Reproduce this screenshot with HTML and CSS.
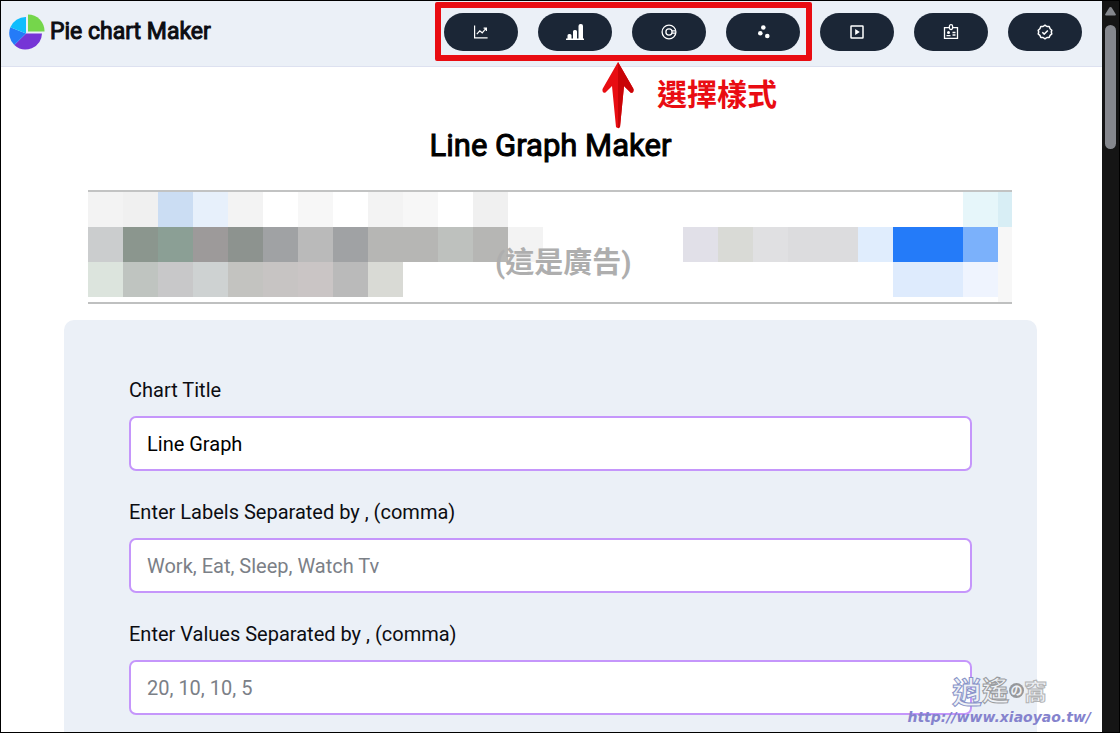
FILE: index.html
```
<!DOCTYPE html>
<html lang="en">
<head>
<meta charset="utf-8">
<title>Pie chart Maker</title>
<meta name="viewport" content="width=device-width, initial-scale=1">
<link rel="stylesheet" href="styles.css">
</head>
<body>
<div class="window">
  <div class="page">
    <header class="navbar">
      <a class="brand" href="#">
        <svg class="brand-logo" viewBox="0 0 36 36" aria-hidden="true">
          <path fill="#7635d6" d="M17 19.500h16A16.500 16.500 0 0 1 5.300 31z"/>
          <path fill="#247bf8" d="M17 19.500L5.300 31A16.500 16.500 0 0 1 1.300 13.300z"/>
          <path fill="#0fbdfd" d="M17 19.500L1.300 13.300A16.500 16.500 0 0 1 17 3z"/>
          <path fill="#75d64b" d="M19 17.500V.500A16.500 16.500 0 0 1 35.500 17.500z"/>
        </svg>
        <span>Pie chart Maker</span>
      </a>
      <nav class="tools">
        <div class="chart-tools">
          <button class="pill" type="button" aria-label="Line graph"><svg viewBox="0 0 16 16"><path fill="none" stroke="currentColor" stroke-width="1.200" d="M1.600 1.500v12.400h13M3.800 10.200l3-3.300 2.400 1.900 4-4.600M10.600 4.200h2.800v2.800"/></svg></button>
          <button class="pill" type="button" aria-label="Bar chart"><svg class="wide" viewBox="0 0 18 18"><path fill="currentColor" d="M1.500 15.500v-3q0-1.500 1.500-1.500h1q1.500 0 1.500 1.500v3h1.500V8.500Q7 7 8.500 7H9.500q1.500 0 1.500 1.500v7h1.500V3q0-2 2-2h.5q2 0 2 2v12.500h1V17H0v-1.500z"/></svg></button>
          <button class="pill" type="button" aria-label="Doughnut chart"><svg viewBox="0 0 16 16"><g fill="none" stroke="currentColor" stroke-width="1.300"><circle cx="8" cy="8" r="6.900"/><path d="M14.800 6.800h-3.700M14.800 9.200h-3.700"/><circle cx="8" cy="8" r="3.100"/></g></svg></button>
          <button class="pill" type="button" aria-label="Scatter plot"><svg viewBox="0 0 16 16"><g fill="currentColor"><circle cx="8.300" cy="3.500" r="2.300"/><circle cx="5.300" cy="9.300" r="2.300"/><circle cx="12.300" cy="12" r="2.300"/></g></svg></button>
          <svg class="arrow" viewBox="0 0 34 68" aria-hidden="true">
            <path fill="#e80d12" d="M17 1L1.500 28q-.5 4.500 3 3.500L11 25l4 41q2 2 4 0l4-41 6.500 6.500q3.500 1 3-3.500z"/>
            <path fill="#c90407" d="M17 1v66.500l2-1.500 4-41 6.500 6.500q3.500 1 3-3.500z"/>
          </svg>
          <span class="note">選擇樣式</span>
        </div>
        <button class="pill" type="button" aria-label="Video"><svg viewBox="0 0 16 16"><rect x="2" y="2" width="12" height="12" rx=".5" fill="none" stroke="currentColor" stroke-width="1.500"/><path fill="currentColor" d="M6.200 4.900v6.200L10.800 8z"/></svg></button>
        <button class="pill" type="button" aria-label="About"><svg viewBox="0 0 16 16"><g fill="none" stroke="currentColor" stroke-width="1.300"><path d="M6 3.700H1.500v10.600h13V3.700H10"/><rect x="6.400" y=".7" width="3.200" height="4.800" rx="1.500"/><path d="M3.500 11.700h4M9.500 8.500h3M9.500 11h3"/></g><circle cx="5.500" cy="8.600" r="1.500" fill="currentColor"/></svg></button>
        <button class="pill" type="button" aria-label="Verified"><svg viewBox="0 0 16 16"><g fill="none" stroke="currentColor" stroke-width="1.500" stroke-linejoin="round"><path d="M8 1.200l1.900 1.300 2.300 0 .9 2.200 1.700 1.500L14.300 8l.5 1.900-1.700 1.400-.9 2.200h-2.300L8 14.800l-1.900-1.300H3.800l-.9-2.200-1.700-1.400L1.700 8l-.5-1.800 1.700-1.500.9-2.200h2.300z"/><path d="M5.300 8.200l2 1.900 3.500-3.700"/></g></svg></button>
      </nav>
    </header>

    <main class="content">
      <h1 class="title">Line Graph Maker</h1>

      <aside class="ad">
        <svg class="ad-mosaic" viewBox="0 0 924 110" preserveAspectRatio="none" shape-rendering="crispEdges" aria-hidden="true">
          <g>
            <path fill="#f3f3f3" d="M0 0h35v35H0zM140 0h35v35h-35zM280 0h35v35h-35z"/>
            <path fill="#f0f0f0" d="M35 0h35v35H35zM385 0h35v35h-35z"/>
            <path fill="#cbddf3" d="M70 0h35v35H70z"/>
            <path fill="#e7f0fb" d="M105 0h35v35h-35z"/>
            <path fill="#f7f7f7" d="M210 0h35v35h-35zM315 0h35v35h-35zM910 35h14v75h-14z"/>
            <path fill="#e6f6fa" d="M875 0h35v35h-35z"/>
            <path fill="#d8eef5" d="M910 0h14v35h-14z"/>
          </g>
          <g>
            <path fill="#cbcdce" d="M0 35h35v35H0z"/>
            <path fill="#8b968e" d="M35 35h35v35H35z"/>
            <path fill="#8b9f95" d="M70 35h35v35H70z"/>
            <path fill="#9d9a9a" d="M105 35h35v35h-35z"/>
            <path fill="#8d938f" d="M140 35h35v35h-35z"/>
            <path fill="#a0a2a4" d="M175 35h35v35h-35zM245 35h35v35h-35z"/>
            <path fill="#bababa" d="M210 35h35v35h-35z"/>
            <path fill="#b6b6b4" d="M280 35h70v35h-70zM385 35h35v35h-35z"/>
            <path fill="#bec1be" d="M350 35h35v35h-35z"/>
            <path fill="#f3f3f3" d="M420 35h35v35h-35z"/>
            <path fill="#e1e0e8" d="M595 35h35v35h-35z"/>
            <path fill="#d9dad6" d="M630 35h35v35h-35z"/>
            <path fill="#e0e0e2" d="M665 35h35v35h-35z"/>
            <path fill="#dcdcde" d="M700 35h70v35h-70z"/>
            <path fill="#e0edfd" d="M770 35h35v35h-35z"/>
            <path fill="#247bf9" d="M805 35h70v35h-70z"/>
            <path fill="#7bb1fb" d="M875 35h35v35h-35z"/>
          </g>
          <g>
            <path fill="#dce4dd" d="M0 70h35v35H0z"/>
            <path fill="#bfc4c0" d="M35 70h35v35H35z"/>
            <path fill="#c8c8c9" d="M70 70h35v35H70z"/>
            <path fill="#ced2d2" d="M105 70h35v35h-35z"/>
            <path fill="#c3c3c0" d="M140 70h35v35h-35z"/>
            <path fill="#c7c4c3" d="M175 70h35v35h-35z"/>
            <path fill="#cac5c5" d="M210 70h35v35h-35z"/>
            <path fill="#bababa" d="M245 70h35v35h-35z"/>
            <path fill="#d9dad5" d="M280 70h35v35h-35z"/>
            <path fill="#deebfd" d="M805 70h70v35h-70z"/>
            <path fill="#eff4fe" d="M875 70h35v35h-35z"/>
          </g>
        </svg>
        <span class="ad-note">(這是廣告)</span>
      </aside>

      <form class="card">
        <div class="field">
          <label for="chart-title">Chart Title</label>
          <input id="chart-title" type="text" value="Line Graph">
        </div>
        <div class="field">
          <label for="chart-labels">Enter Labels Separated by , (comma)</label>
          <input id="chart-labels" type="text" placeholder="Work, Eat, Sleep, Watch Tv">
        </div>
        <div class="field">
          <label for="chart-values">Enter Values Separated by , (comma)</label>
          <input id="chart-values" type="text" placeholder="20, 10, 10, 5">
        </div>
      </form>
    </main>
  </div>

  <div class="scrollbar" aria-hidden="true">
    <svg class="scroll-up" viewBox="0 0 11 9"><path fill="#85878d" d="M5.500 0q.8 0 1.300.8l4 6.500Q11 8.500 10 8.500H1Q0 8.500.200 7.300l4-6.500Q4.700 0 5.500 0z"/></svg>
    <div class="scroll-thumb"></div>
  </div>

  <div class="watermark">
    <span class="mark-name"><span class="mark-blue">逍</span><span class="mark-gray">遙</span><span class="mark-no">の</span><span class="mark-light">窩</span></span>
    <span class="mark-url">http://www.xiaoyao.tw/</span>
  </div>
</div>
</body>
</html>
```
FILE: styles.css
```
* {
  box-sizing: border-box;
}

body {
  margin: 0;
  font-family: Roboto, "Noto Sans CJK TC", sans-serif;
  color: #0c0d12;
  background: #fff;
}

.window {
  position: relative;
  display: flex;
  height: 100vh;
  overflow: hidden;
  border: 1px solid #000;
}

.page {
  flex: 1;
  min-width: 0;
}

.navbar {
  display: flex;
  align-items: center;
  justify-content: space-between;
  padding: 12px 20px 15px 8px;
  background: #ebf0f7;
  border-bottom: 1px solid #dde1f0;
}

.brand {
  display: flex;
  align-items: center;
  gap: 5px;
  color: inherit;
  font-size: 23px;
  font-weight: 400;
  line-height: 36px;
  text-decoration: none;
  white-space: nowrap;
  -webkit-text-stroke: 1px currentColor;
}

.brand-logo {
  width: 36px;
  height: 36px;
}

.tools,
.chart-tools {
  display: flex;
  gap: 20px;
}

.chart-tools {
  position: relative;
}

.chart-tools::before {
  content: "";
  position: absolute;
  inset: -11px -12px -10px -9px;
  border: 6px solid #e90c12;
  border-radius: 2px;
  pointer-events: none;
}

.arrow {
  position: absolute;
  top: 48px;
  left: 157px;
  width: 34px;
  height: 68px;
}

.note {
  position: absolute;
  top: 61px;
  left: 213px;
  color: #e90c12;
  font-size: 30px;
  font-weight: 700;
  line-height: 42px;
  white-space: nowrap;
}

.pill {
  display: flex;
  align-items: center;
  justify-content: center;
  width: 74px;
  height: 38px;
  padding: 0;
  border: 0;
  border-radius: 19px;
  background: #1b2636;
  color: #fff;
}

.pill svg {
  width: 16px;
  height: 16px;
}

.pill .wide {
  width: 18px;
  height: 18px;
}

.content {
  padding: 59px 65px 0 63px;
}

.title {
  margin: 0 0 24px;
  color: #000;
  font-size: 31px;
  font-weight: 400;
  line-height: 40px;
  text-align: center;
  -webkit-text-stroke: 1px currentColor;
}

.ad {
  position: relative;
  margin: 0 25px 16px 24px;
  border-top: 2px solid #c2c3c3;
  border-bottom: 2px solid #bfc0c0;
}

.ad-mosaic {
  display: block;
  width: 100%;
  height: 110px;
}

.ad-note {
  position: absolute;
  top: 50px;
  left: 407px;
  color: #aeaeae;
  font-size: 29px;
  font-weight: 700;
  line-height: 42px;
  white-space: nowrap;
}

.card {
  display: flex;
  flex-direction: column;
  gap: 29px;
  padding: 58px 65px 60px;
  border-radius: 10px;
  background: #ebf0f7;
}

.field {
  display: flex;
  flex-direction: column;
  gap: 14px;
  font-size: 20px;
  line-height: 24px;
}

.field input {
  width: 100%;
  height: 55px;
  padding: 0 16px;
  border: 2px solid #c596fb;
  border-radius: 7px;
  background: #fff;
  color: #000;
  font: inherit;
}

.field input::placeholder {
  color: #7b8087;
}

.scrollbar {
  display: flex;
  flex-direction: column;
  align-items: center;
  gap: 9px;
  width: 17px;
  padding-top: 6px;
  background: #151515;
}

.scroll-up {
  width: 11px;
  height: 9px;
}

.scroll-thumb {
  width: 11px;
  height: 124px;
  border-radius: 6px;
  background: #85878d;
}

.watermark {
  position: absolute;
  right: 28px;
  bottom: 7px;
  display: flex;
  flex-direction: column;
  align-items: flex-end;
}

.mark-name {
  display: flex;
  align-items: center;
  padding-right: 44px;
  font-family: "Noto Sans CJK TC", sans-serif;
  font-weight: 700;
  line-height: 38px;
  color: #eef1f6;
}

.mark-blue {
  font-size: 30px;
  -webkit-text-stroke: 1px #8893c8;
}

.mark-gray {
  font-size: 27px;
  -webkit-text-stroke: 1px #9a9c9f;
}

.mark-no {
  width: 15px;
  height: 15px;
  border-radius: 50%;
  background: #96989b;
  font-size: 12px;
  line-height: 14px;
  text-align: center;
}

.mark-light {
  font-size: 23px;
  -webkit-text-stroke: 1px #b3b4b5;
}

.mark-url {
  color: #8583cd;
  font-family: "DejaVu Sans", sans-serif;
  font-size: 14px;
  font-style: italic;
  font-weight: 700;
  line-height: 16px;
}
```
